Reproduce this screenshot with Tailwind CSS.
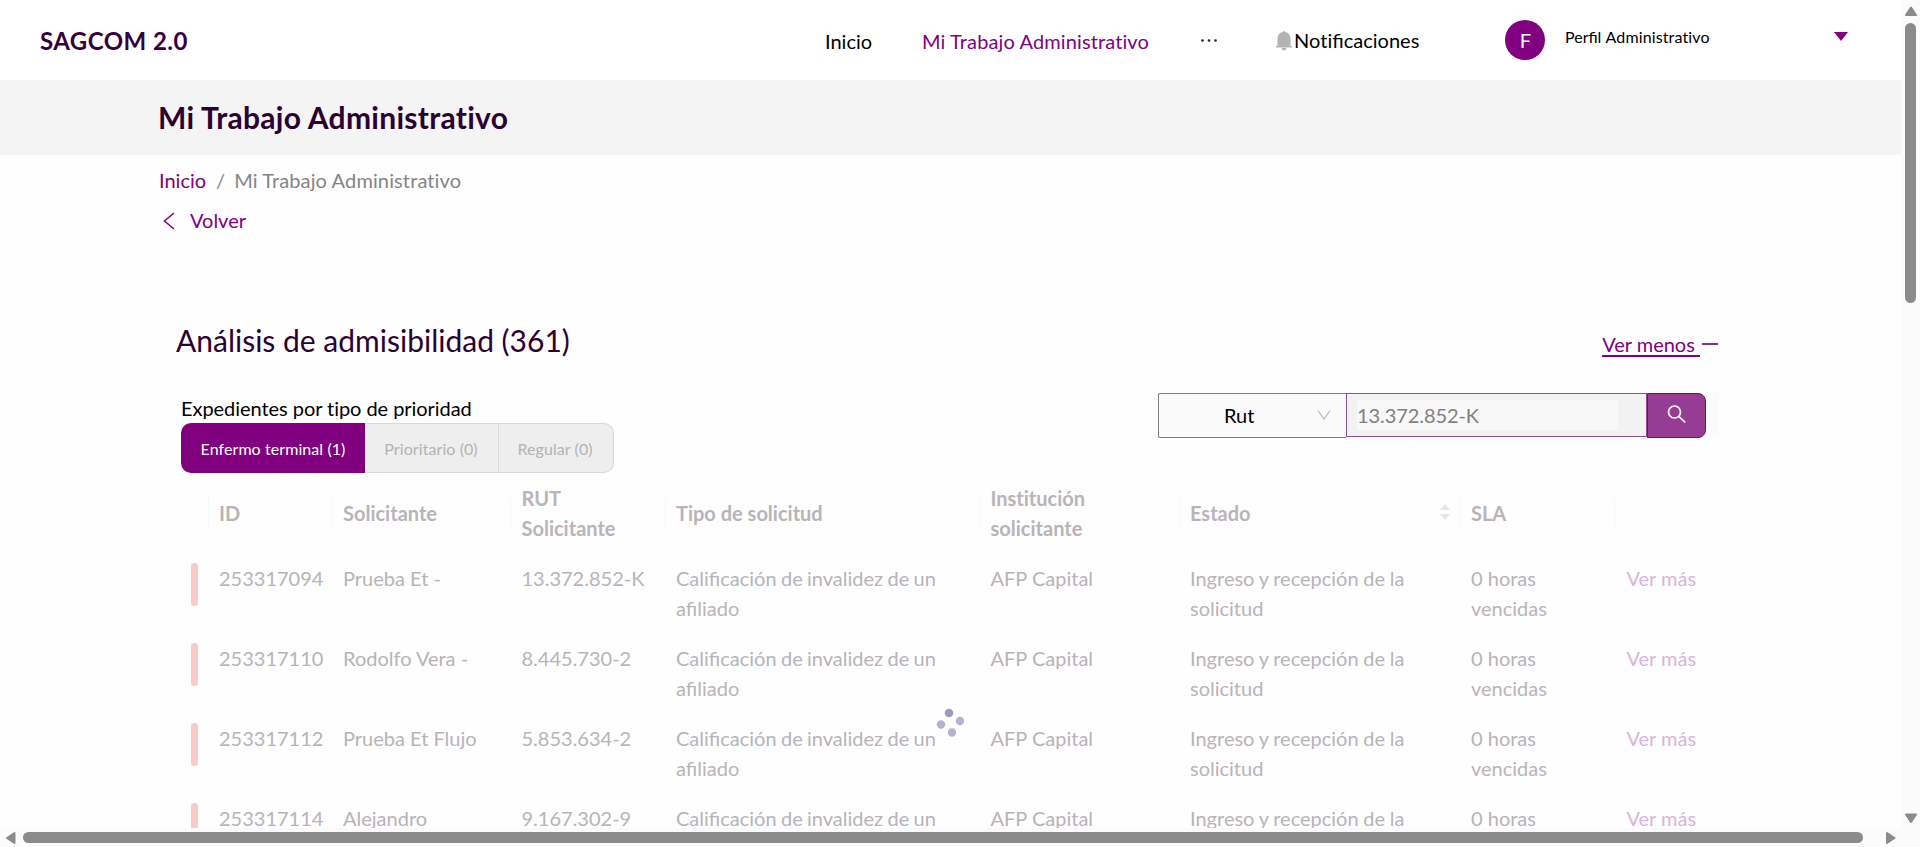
<!DOCTYPE html>
<html lang="es"><head><meta charset="utf-8"><title>SAGCOM 2.0</title>
<script src="https://cdn.jsdelivr.net/npm/@tailwindcss/browser@4"></script></head>
<body class="h-[847px] w-[1920px] overflow-hidden bg-[#fefefe] font-['Lato',sans-serif] text-[20px] leading-[30px] text-black">
<div class="grid h-[847px] grid-cols-[1901px_19px] grid-rows-[828px_19px]">
<div class="relative overflow-hidden">
<header class="flex h-20 items-center bg-white pl-10">
  <div class="w-[785px] pt-px text-[24px] font-bold tracking-[0.45px] text-[#36003a]">SAGCOM 2.0</div>
  <nav class="flex items-center">
    <a class="w-[97px] pt-0.5">Inicio</a>
    <a class="w-[279px] pt-0.5 tracking-[0.12px] text-[#800080] [font-variant-ligatures:none]">Mi Trabajo Administrativo</a>
    <svg class="w-[75px]" width="75" height="20" viewBox="0 0 75 20"><g fill="#222"><circle cx="1.5" cy="10.500" r="1.300"/><circle cx="8" cy="10.500" r="1.300"/><circle cx="14.500" cy="10.500" r="1.300"/></g></svg>
    <svg class="-ml-px mr-px mt-0.5" width="18" height="22" viewBox="0 0 18 22" fill="#b3b3b3"><path d="M8 2a1 1 0 0 1 2 0c3.600.6 5.500 3.200 5.500 6.500V16H17v1.500H1V16h1.500V8.500C2.500 5.200 4.400 2.600 8 2zM6.500 18h5a2.500 2.500 0 0 1-5 0z"/></svg>
    <a class="w-[211px]">No<span class="[font-variant-ligatures:none]">t</span>ificaciones</a>
  </nav>
  <div class="flex h-10 w-10 items-center justify-center rounded-full bg-[#800080] pl-px text-white">F</div>
  <div class="ml-5 w-[269px] pb-1.5 text-[16px] leading-6">Perfil <span class="tracking-[0.13px] [font-variant-ligatures:none]">Administrativo</span></div>
  <svg class="mb-2" width="14" height="9" viewBox="0 0 14 9" fill="#800080"><path d="M0 0h14L7 9z"/></svg>
</header>
<div class="flex h-[75px] items-center bg-[#f4f4f4] pb-0.5 pl-[158px] text-[30px] font-bold tracking-[0.28px] text-[#2c0030] [font-variant-ligatures:none]">Mi Trabajo Administrativo</div>
<main class="pl-[159px] pt-[10px]">
  <div class="flex h-[30px] text-[#858585] [font-variant-ligatures:none]"><a class="text-[#800080]">Inicio</a><span class="pr-[9px] pl-[10px]">/</span><span class="tracking-[0.12px]">Mi Trabajo Administrativo</span></div>
  <a class="mt-[10px] flex h-[30px] items-center text-[#800080]"><svg class="mt-px mr-[15px] ml-1" width="12" height="18" viewBox="0 0 12 18" fill="none" stroke="#800080" stroke-width="1.500"><path d="M11 1L1.500 9l9.500 8"/></svg>Volver</a>
  <section class="ml-[17px] mt-[83px] w-[1543px]">
    <div class="flex h-[45px] items-center justify-between">
      <h2 class="text-[30px] leading-[45px] text-[#2c0030]">Análisis de admisibilidad (361)</h2>
      <a class="mt-1.5 flex items-center text-[#800080]"><span class="whitespace-pre underline decoration-2 underline-offset-[3px]">Ver menos </span><i class="mr-px ml-[2px] block h-[2px] w-[16px] bg-[#8f2a8f]"></i></a>
    </div>
    <div class="mt-[30px] flex h-[80px] justify-between pl-[5px]">
      <div>
        <div class="tracking-[-0.05px] [font-variant-ligatures:none]">Expedientes por tipo de prioridad</div>
        <div class="flex h-[50px] w-[433px] text-[16px] tracking-[0.08px] text-[#b3b3b3] [font-variant-ligatures:none]">
          <div class="flex w-[184px] items-center justify-center rounded-l-[10px] bg-[#800080] pt-0.5 text-white">Enfermo terminal (1)</div>
          <div class="flex w-[134px] items-center justify-center border-y border-r border-[#d9d9d9] bg-[#eee] pt-0.5 pr-px">Prioritario (0)</div>
          <div class="flex w-[115px] items-center justify-center rounded-r-[10px] border-y border-r border-[#d9d9d9] bg-[#eee] pt-0.5 pr-0.5">Regular (0)</div>
        </div>
      </div>
      <div class="flex h-[45px] w-[561px] bg-[#fbfbfb]">
        <div class="flex w-[188px] items-center rounded-l-[2px] border border-r-0 border-[#7d7d7d] bg-[#fafafa] pb-0.5 pl-[65px]">Rut<svg class="ml-[63px]" width="14" height="10" viewBox="0 0 14 10" fill="none" stroke="#bbb" stroke-width="1.300"><path d="M1 .5l6 8.500L13 .5"/></svg></div>
        <div class="flex h-[44px] w-[301px] border border-[#8d4f92] bg-[#f2f2f2] pl-[10px] pt-[6px]"><div class="h-[30px] w-[261px] bg-[#f8f8f8] tracking-[-0.08px] text-[#808080]">13.372.852-K</div></div>
        <div class="flex w-[59px] justify-center rounded-r-[8px] border border-[#800080] bg-[#963c94] pt-[10px]"><svg width="20" height="20" viewBox="0 0 20 20" fill="none" stroke="white" stroke-width="1.700"><circle cx="7.500" cy="8" r="6"/><path d="M11.800 12.300l6.500 6.200"/></svg></div>
      </div>
    </div>
    <div id="table" class="text-[#b9b3ba]"></div>
  </section>
</main>
<svg class="absolute left-[935px] top-[707px]" width="32" height="32" viewBox="0 0 32 32"><circle cx="14" cy="6" r="4.300" fill="#9c9cc0"/><circle cx="25" cy="14" r="4.200" fill="#b3b3d0"/><circle cx="17" cy="25.500" r="4.200" fill="#b3b3d0"/><circle cx="6" cy="17.500" r="4.200" fill="#b3b3d0"/></svg>
</div>
<div class="row-span-2 bg-[#fbfbfb]"><svg width="19" height="847" viewBox="0 0 19 847" fill="#8b8b8b" stroke="#8b8b8b" stroke-linejoin="round"><rect x="4" y="23" width="11" height="280" rx="5.500" stroke="none"/><path stroke-width="2" d="M5 15h10L10 7.500z M5 814.500h10L10 822z"/></svg></div>
<div class="bg-[#fbfbfb]"><svg width="1901" height="19" viewBox="0 0 1901 19" fill="#8b8b8b" stroke="#8b8b8b" stroke-linejoin="round"><rect x="23" y="4" width="1840" height="11" rx="5.500" stroke="none"/><path stroke-width="2" d="M14.500 5v10L7 10z M1887 5v10l7.500-5z"/></svg></div>
</div>
<script>
const grid = 'grid grid-cols-[33px_124px_178.500px_154.500px_314.500px_199.500px_281px_154.500px_100px] h-20';
const heads = ['', 'ID', 'Solicitante', 'RUT<br>Solicitante', 'Tipo de solicitud', 'Institución<br>solicitante', 'Estado', 'SLA', ''];
const sorter = '<svg class="mr-[11px] mb-0.5" width="10" height="16" viewBox="0 0 10 16" fill="#e6e6e6"><path d="M0 6h10L5 0zM0 10h10l-5 6z"/></svg>';
const rows = [['253317094','Prueba Et -','13.372.852-K'],['253317110','Rodolfo Vera -','8.445.730-2'],['253317112','Prueba Et Flujo','5.853.634-2'],['253317114','Alejandro','9.167.302-9']];
let html = `<div class="${grid} items-center pb-px font-bold [font-variant-ligatures:none]">` + heads.map((h, i) =>
  `<div class="flex items-center justify-between ${i ? 'pl-[10px]' : ''} relative"><span>${h}</span>${h === 'Estado' ? sorter : ''}${i ? '<i class="absolute -left-[1.500px] top-1/2 h-8 w-px -translate-y-1/2 bg-[#f7f7f7]"></i>' : ''}</div>`).join('') + '</div>';
for (const r of rows) {
  const cells = [...r, '<span class="[word-spacing:-0.8px]">Calificación de invalidez de un</span><br>afiliado', 'AFP Capital', '<span class="[word-spacing:-0.4px]">Ingreso y recepción de la</span><br>solicitud', '0 horas<br>vencidas', '<span class="pl-px text-[#dcb3dc]">Ver más</span>'];
  html += `<div class="${grid}"><div class="pl-[15px] pt-[10px]"><i class="block h-[43px] w-[7px] rounded-[3px] bg-[#f9caca]"></i></div>` + cells.map(c => `<div class="whitespace-nowrap pl-[10px] pt-[10px]">${c}</div>`).join('') + '</div>';
}
document.getElementById('table').innerHTML = html;
</script>
</body></html>
